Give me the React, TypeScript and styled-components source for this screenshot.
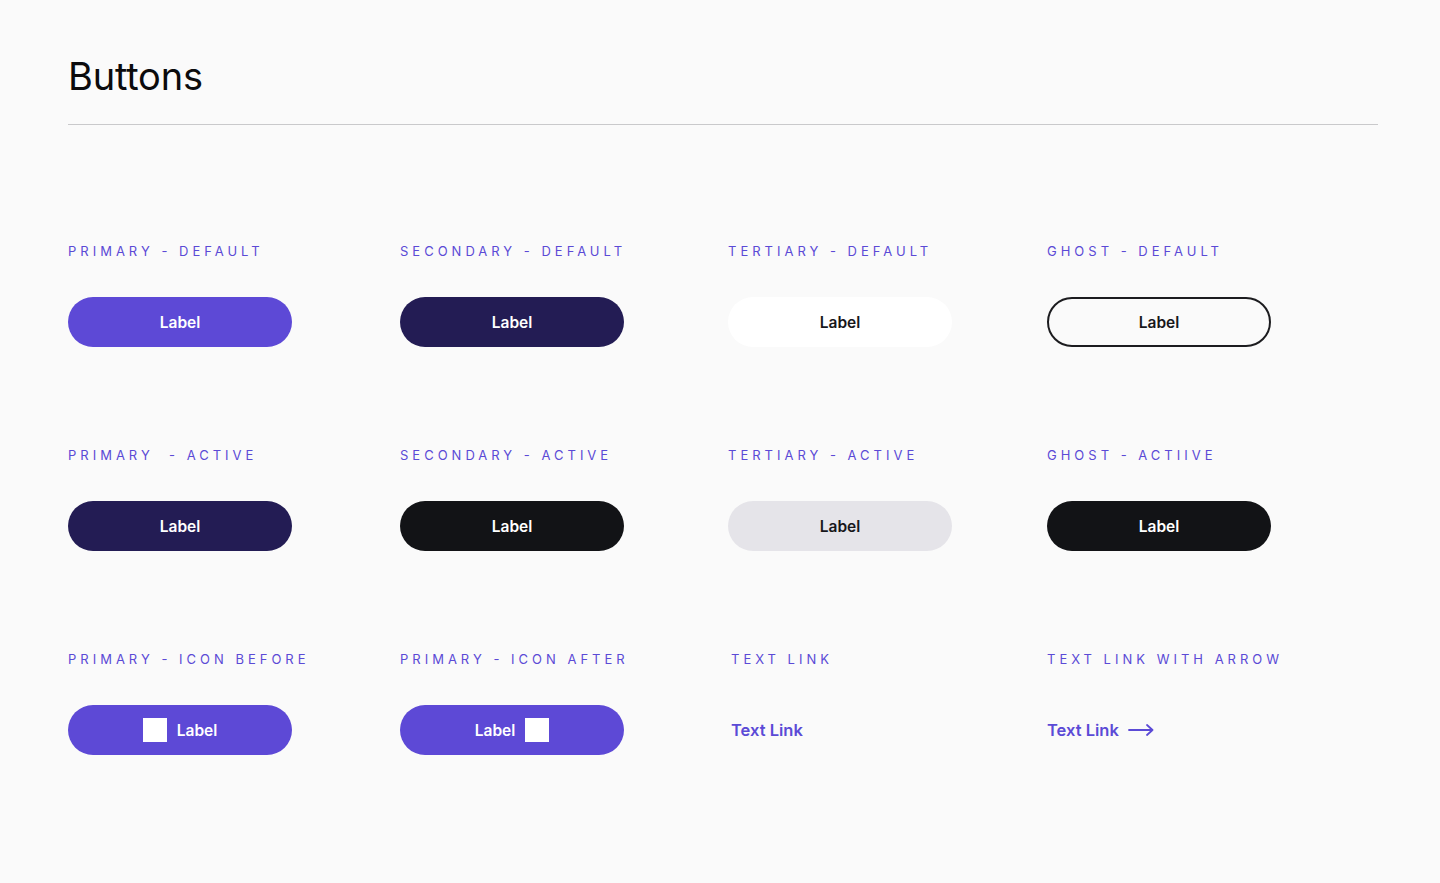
import React from "react";
import styled, { createGlobalStyle } from "styled-components";

const Global = createGlobalStyle`
  html, body { margin: 0; padding: 0; background: #fafafa; }
  body { font-family: Inter, "Noto Sans", sans-serif; -webkit-font-smoothing: antialiased; }
  * { box-sizing: border-box; }
`;

const Page = styled.main`
  padding: 54px 62px 0 68px;
  min-height: 883px;
  background: #fafafa;
`;

const Title = styled.h1`
  margin: 0;
  font-size: 38px;
  line-height: 44px;
  font-weight: 400;
  color: #0b0b0d;
  letter-spacing: -0.2px;
`;

const Rule = styled.hr`
  margin: 26px 0 0;
  border: 0;
  height: 1px;
  background: #c9c9cb;
`;

const Grid = styled.section`
  margin-top: 118px;
  display: grid;
  grid-template-columns: 332px 328px 319px 1fr;
  row-gap: 100px;
`;

const Cell = styled.div<{ $indent?: number }>`
  display: flex;
  flex-direction: column;
  gap: 38px;
  padding-left: ${(p) => p.$indent ?? 0}px;
`;

const Caption = styled.div`
  font-size: 13px;
  line-height: 16px;
  letter-spacing: 4px;
  color: #5b4ad6;
  font-weight: 400;
  text-transform: uppercase;
  white-space: pre;
`;

type Variant = "primary" | "secondary" | "tertiary" | "ghost" | "tertiaryActive" | "black";

const palette: Record<Variant, { bg: string; fg: string; border: string }> = {
  primary: { bg: "#5d49d6", fg: "#ffffff", border: "transparent" },
  secondary: { bg: "#231c54", fg: "#ffffff", border: "transparent" },
  black: { bg: "#121316", fg: "#ffffff", border: "transparent" },
  tertiary: { bg: "#ffffff", fg: "#17171b", border: "transparent" },
  tertiaryActive: { bg: "#e5e4e9", fg: "#17171b", border: "transparent" },
  ghost: { bg: "transparent", fg: "#17171b", border: "#1c1c1f" },
};

const Button = styled.button<{ $v: Variant }>`
  width: 224px;
  height: 50px;
  border-radius: 25px;
  border: 2px solid ${(p) => palette[p.$v].border};
  background: ${(p) => palette[p.$v].bg};
  color: ${(p) => palette[p.$v].fg};
  font-family: Inter, "Noto Sans", sans-serif;
  font-size: 15.5px;
  font-weight: 600;
  display: flex;
  align-items: center;
  justify-content: center;
  gap: 10px;
  padding: 0;
  cursor: pointer;
`;

const IconBox = styled.span`
  width: 24px;
  height: 24px;
  background: #ffffff;
  display: block;
`;

const LinkRow = styled.div`
  height: 50px;
  display: flex;
  align-items: center;
`;

const TextLink = styled.a`
  display: inline-flex;
  align-items: center;
  gap: 9px;
  color: #5b4ad6;
  font-size: 16.5px;
  font-weight: 600;
  text-decoration: none;
  cursor: pointer;
`;

const Arrow = () => (
  <svg width="26" height="12" viewBox="0 0 26 12" fill="none">
    <path d="M1 6H24.5M19 1L24.5 6L19 11" stroke="#5b4ad6" strokeWidth="1.8" strokeLinecap="round" strokeLinejoin="round" />
  </svg>
);

export default function App() {
  return (
    <>
      <Global />
      <Page>
        <Title>Buttons</Title>
        <Rule />
        <Grid>
          <Cell>
            <Caption>Primary - Default</Caption>
            <Button $v="primary">Label</Button>
          </Cell>
          <Cell>
            <Caption>Secondary - Default</Caption>
            <Button $v="secondary">Label</Button>
          </Cell>
          <Cell>
            <Caption>Tertiary - Default</Caption>
            <Button $v="tertiary">Label</Button>
          </Cell>
          <Cell>
            <Caption>Ghost - Default</Caption>
            <Button $v="ghost">Label</Button>
          </Cell>

          <Cell>
            <Caption>{"Primary  - Active"}</Caption>
            <Button $v="secondary">Label</Button>
          </Cell>
          <Cell>
            <Caption>Secondary - Active</Caption>
            <Button $v="black">Label</Button>
          </Cell>
          <Cell>
            <Caption>Tertiary - Active</Caption>
            <Button $v="tertiaryActive">Label</Button>
          </Cell>
          <Cell>
            <Caption>Ghost - Actiive</Caption>
            <Button $v="black">Label</Button>
          </Cell>

          <Cell>
            <Caption>Primary - Icon Before</Caption>
            <Button $v="primary">
              <IconBox />
              Label
            </Button>
          </Cell>
          <Cell>
            <Caption>Primary - Icon After</Caption>
            <Button $v="primary">
              Label
              <IconBox />
            </Button>
          </Cell>
          <Cell $indent={3}>
            <Caption>Text Link</Caption>
            <LinkRow>
              <TextLink>Text Link</TextLink>
            </LinkRow>
          </Cell>
          <Cell>
            <Caption>Text Link with Arrow</Caption>
            <LinkRow>
              <TextLink>
                Text Link
                <Arrow />
              </TextLink>
            </LinkRow>
          </Cell>
        </Grid>
      </Page>
    </>
  );
}
